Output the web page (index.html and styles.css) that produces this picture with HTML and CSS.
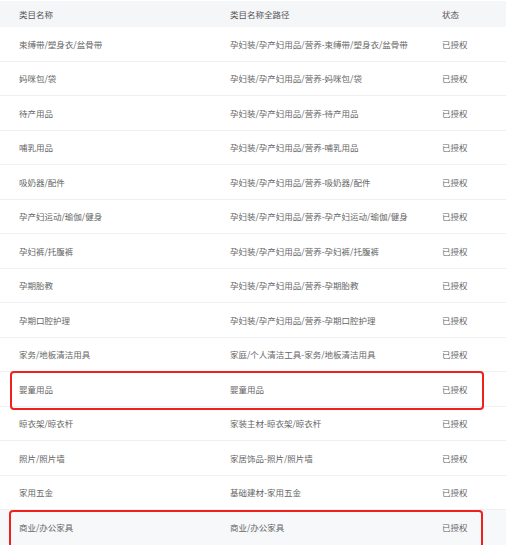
FILE: index.html
```html
<!DOCTYPE html>
<html lang="zh-CN">
<head>
    <meta charset="UTF-8">
    <meta name="viewport" content="width=device-width, initial-scale=1.0">
    <title>类目授权</title>
    <link rel="stylesheet" href="styles.css">
</head>
<body>

    <div class="table">
        <div class="row head">
            <div>类目名称</div>
            <div>类目名称全路径</div>
            <div>状态</div>
        </div>

        <div class="row">
            <div>束缚带/塑身衣/盆骨带</div>
            <div>孕妇装/孕产妇用品/营养-束缚带/塑身衣/盆骨带</div>
            <div>已授权</div>
        </div>
        <div class="row">
            <div>妈咪包/袋</div>
            <div>孕妇装/孕产妇用品/营养-妈咪包/袋</div>
            <div>已授权</div>
        </div>
        <div class="row">
            <div>待产用品</div>
            <div>孕妇装/孕产妇用品/营养-待产用品</div>
            <div>已授权</div>
        </div>
        <div class="row">
            <div>哺乳用品</div>
            <div>孕妇装/孕产妇用品/营养-哺乳用品</div>
            <div>已授权</div>
        </div>
        <div class="row">
            <div>吸奶器/配件</div>
            <div>孕妇装/孕产妇用品/营养-吸奶器/配件</div>
            <div>已授权</div>
        </div>
        <div class="row">
            <div>孕产妇运动/瑜伽/健身</div>
            <div>孕妇装/孕产妇用品/营养-孕产妇运动/瑜伽/健身</div>
            <div>已授权</div>
        </div>
        <div class="row">
            <div>孕妇裤/托腹裤</div>
            <div>孕妇装/孕产妇用品/营养-孕妇裤/托腹裤</div>
            <div>已授权</div>
        </div>
        <div class="row">
            <div>孕期胎教</div>
            <div>孕妇装/孕产妇用品/营养-孕期胎教</div>
            <div>已授权</div>
        </div>
        <div class="row">
            <div>孕期口腔护理</div>
            <div>孕妇装/孕产妇用品/营养-孕期口腔护理</div>
            <div>已授权</div>
        </div>
        <div class="row">
            <div>家务/地板清洁用具</div>
            <div>家庭/个人清洁工具-家务/地板清洁用具</div>
            <div>已授权</div>
        </div>
        <div class="row marked">
            <div>婴童用品</div>
            <div>婴童用品</div>
            <div>已授权</div>
        </div>
        <div class="row">
            <div>晾衣架/晾衣杆</div>
            <div>家装主材-晾衣架/晾衣杆</div>
            <div>已授权</div>
        </div>
        <div class="row">
            <div>照片/照片墙</div>
            <div>家居饰品-照片/照片墙</div>
            <div>已授权</div>
        </div>
        <div class="row">
            <div>家用五金</div>
            <div>基础建材-家用五金</div>
            <div>已授权</div>
        </div>
        <div class="row marked hover last">
            <div>商业/办公家具</div>
            <div>商业/办公家具</div>
            <div>已授权</div>
        </div>
    </div>

</body>
</html>
```

FILE: styles.css
```css
body {
    margin: 0;
    background: #ffffff;
    font-family: "Noto Sans CJK SC", "Noto Sans", sans-serif;
    font-size: 8.5px;
    color: #666666;
}

.table {
    padding-top: 1px;
}

.row {
    position: relative;
    display: grid;
    grid-template-columns: 211px 212px 1fr;
    align-items: center;
    height: 34.5px;
    padding-left: 19px;
    box-sizing: border-box;
    border-bottom: 1px solid #eef0f3;
    white-space: nowrap;
}

.row.head {
    height: 26px;
    background: #f5f6f8;
    color: #555555;
    border-bottom: none;
}

.row.hover {
    background: #f7f8fa;
}

.row.last {
    border-bottom: none;
}

/* red highlight box */
.row.marked::after {
    content: "";
    position: absolute;
    top: -1px;
    bottom: -4px;
    left: 10px;
    right: 22px;
    border: 2.5px solid #f0201c;
    border-radius: 4px;
}

.row.marked.last::after {
    top: 0;
    bottom: -3px;
    left: 9px;
    right: 23px;
}
```
